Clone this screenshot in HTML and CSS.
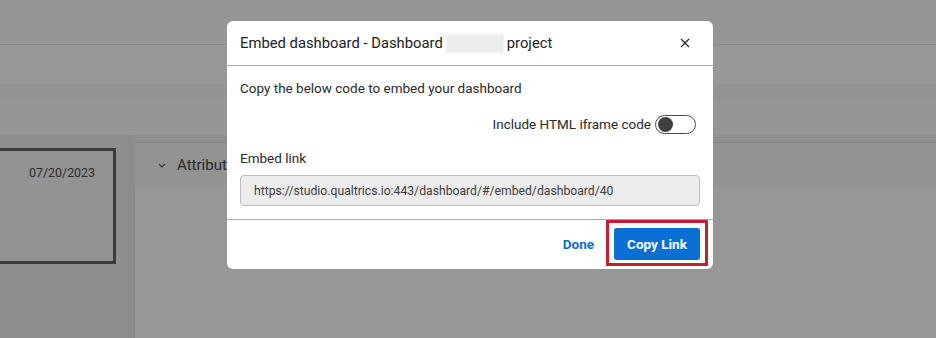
FILE: index.html
```html
<!DOCTYPE html>
<html lang="en">
<head>
<meta charset="utf-8">
<title>Embed dashboard</title>
<link rel="stylesheet" href="styles.css">
</head>
<body>
<div class="app">
  <div class="topbar"></div>
  <div class="subbar"></div>
  <div class="strip"></div>
  <div class="spacer"></div>
  <div class="content">
    <div class="leftcol">
      <div class="card"><span class="date">07/20/2023</span></div>
    </div>
    <div class="divider"></div>
    <div class="panel">
      <div class="panel-head">
        <svg class="chev" width="8" height="5" viewBox="0 0 8 5"><path d="M1 1l3 3 3-3" fill="none" stroke="#333" stroke-width="1.1"/></svg>
        <span class="panel-title">Attributes</span>
      </div>
    </div>
  </div>
</div>

<div class="modal" role="dialog">
  <div class="modal-head">
    <span class="modal-title">Embed dashboard - Dashboard<span class="blur"></span>project</span>
    <svg class="close" width="10" height="10" viewBox="0 0 10 10"><path d="M1 1l8 8M9 1l-8 8" stroke="#2b2b2b" stroke-width="1.3" fill="none"/></svg>
  </div>
  <div class="modal-body">
    <p class="intro">Copy the below code to embed your dashboard</p>
    <div class="toggle-row">
      <span>Include HTML iframe code</span>
      <span class="toggle"><span class="knob"></span></span>
    </div>
    <div class="label">Embed link</div>
    <div class="input">https://studio.qualtrics.io:443/dashboard/#/embed/dashboard/40</div>
  </div>
  <div class="modal-foot">
    <span class="done">Done</span>
    <span class="copy">Copy Link</span>
  </div>
</div>
</body>
</html>
```
FILE: styles.css
```css
html, body {
  margin: 0;
  padding: 0;
}
body {
  width: 936px;
  height: 338px;
  overflow: hidden;
  background: #979797;
  font-family: Roboto, "Liberation Sans", Arial, sans-serif;
  position: relative;
}
.app {
  display: flex;
  flex-direction: column;
  height: 338px;
}
.topbar {
  height: 44px;
  background: #969696;
  border-bottom: 1px solid #898989;
}
.subbar {
  height: 39px;
  background: #989898;
}
.strip {
  height: 16px;
  background: #939393;
}
.spacer {
  height: 35px;
  background: #969696;
}
.content {
  flex: 1;
  display: flex;
}
.leftcol {
  width: 128px;
  background: #8f8f8f;
  padding-top: 13px;
  overflow: hidden;
}
.card {
  margin-left: -10px;
  width: 120px;
  height: 96px;
  border: 3px solid #3b3b3b;
  background: #939393;
  display: flex;
  justify-content: flex-end;
  padding-top: 14px;
  box-sizing: content-box;
}
.date {
  font-size: 12.4px;
  color: #2c2c2c;
  padding-right: 18px;
  line-height: 16px;
}
.divider {
  width: 7px;
  background: #8a8a8a;
}
.panel {
  flex: 1;
  background: #979797;
  padding-top: 7px;
  background-image: linear-gradient(#8f8f8f, #8f8f8f);
  background-size: 100% 7px;
  background-repeat: no-repeat;
}
.panel-head {
  height: 44px;
  border-top: 1px solid #858585;
  background: #939393;
  display: flex;
  align-items: center;
  padding-left: 23px;
  gap: 11px;
}
.panel-title {
  font-size: 15px;
  color: #2a2a2a;
}

/* modal */
.modal {
  position: absolute;
  left: 227px;
  top: 21px;
  width: 486px;
  height: 248px;
  background: #fff;
  border-radius: 6px;
  color: #262626;
  display: flex;
  flex-direction: column;
}
.modal-head {
  height: 44px;
  border-bottom: 1px solid #a9a9a9;
  display: flex;
  align-items: center;
  justify-content: space-between;
  padding: 0 23px 0 13px;
}
.modal-title {
  font-size: 14.8px;
  color: #222;
  display: flex;
  align-items: center;
  white-space: pre;
}
.blur {
  display: inline-block;
  width: 58px;
  height: 19px;
  margin: 0 3px 0 3px;
  background: #ededed;
  filter: blur(1px);
}
.modal-body {
  padding: 12px 13px 13px;
  font-size: 13.5px;
}
.intro {
  margin: 0;
  line-height: 20px;
  color: #2a2a2a;
}
.toggle-row {
  margin-top: 16px;
  height: 20px;
  display: flex;
  justify-content: flex-end;
  align-items: center;
  gap: 4px;
  color: #2a2a2a;
}
.toggle {
  width: 37px;
  height: 17px;
  border: 1px solid #4a4a4a;
  border-radius: 10px;
  display: flex;
  align-items: center;
  padding-left: 2px;
  box-sizing: content-box;
  margin-right: 4px;
}
.knob {
  width: 15px;
  height: 15px;
  border-radius: 50%;
  background: #3f3f3f;
}
.label {
  margin-top: 14px;
  line-height: 20px;
  color: #2a2a2a;
}
.input {
  margin-top: 7px;
  height: 29px;
  border: 1px solid #bdbdbd;
  border-radius: 4px;
  background: #ececec;
  display: flex;
  align-items: center;
  padding-left: 13px;
  color: #3e3e3e;
  font-size: 12.2px;
}
.modal-foot {
  border-top: 1px solid #a9a9a9;
  display: flex;
  justify-content: flex-end;
  align-items: flex-start;
  padding: 8px 13px 0 0;
  gap: 20px;
  font-size: 13.5px;
  font-weight: 700;
}
.done {
  color: #0b6fd2;
  line-height: 32px;
}
.copy {
  position: relative;
  background: #0a6fd5;
  color: #fff;
  border-radius: 3px;
  width: 86px;
  height: 32px;
  display: flex;
  align-items: center;
  justify-content: center;
}
.copy::after {
  content: "";
  position: absolute;
  left: -8px;
  right: -8px;
  top: -8px;
  bottom: -6px;
  border: 3px solid #c41f30;
}
```
